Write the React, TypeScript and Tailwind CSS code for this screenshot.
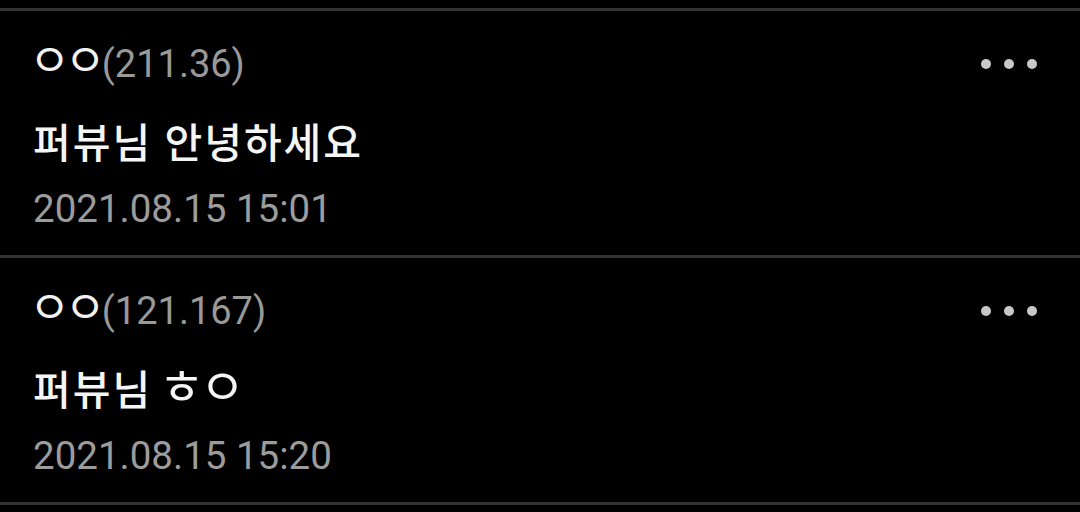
const comments = [
  { ip: "(211.36)", body: "퍼뷰님 안녕하세요", date: "2021.08.15 15:01" },
  { ip: "(121.167)", body: "퍼뷰님 ㅎㅇ", date: "2021.08.15 15:20" },
];

const font = { fontFamily: 'Roboto, "Noto Sans CJK KR", sans-serif' };

// compatibility jamo render small in Noto CJK; enlarge them like the phone font
function Jamo({ text, big }: { text: string; big?: boolean }) {
  return (
    <>
      {Array.from(text).map((ch, i) =>
        /[\u3131-\u318e]/.test(ch) ? (
          <span
            key={i}
            className={
              big
                ? "text-[50px] leading-[0px] tracking-[1px] -ml-[6px] font-normal"
                : "text-[45px] leading-[0px] tracking-[-6px] font-normal"
            }
          >
            {ch}
          </span>
        ) : (
          <span key={i}>{ch}</span>
        )
      )}
    </>
  );
}

function MoreDots() {
  return (
    <div className="flex items-center gap-[13px]">
      <span className="w-[10px] h-[10px] rounded-full bg-[#c8c8c8]" />
      <span className="w-[10px] h-[10px] rounded-full bg-[#c8c8c8]" />
      <span className="w-[10px] h-[10px] rounded-full bg-[#c8c8c8]" />
    </div>
  );
}

function Comment({ ip, body, date }: { ip: string; body: string; date: string }) {
  return (
    <div className="flex justify-between pl-[33px] pr-[43px] pt-[28px] pb-[21px] border-b-[3px] border-[#333333]">
      <div className="flex flex-col">
        <div className="h-[50px] leading-[50px] text-[38px] whitespace-nowrap">
          <span className="text-[#f2f2f2] -ml-[4px]">
            <Jamo text="ㅇㅇ" />
          </span>
          <span className="text-[#999999] ml-[2px]">{ip}</span>
        </div>
        <div className="mt-[27px] h-[56px] leading-[56px] text-[41px] tracking-[2px] font-medium text-[#f5f5f5] whitespace-nowrap">
          <Jamo text={body} big />
        </div>
        <div className="mt-[12px] h-[50px] leading-[50px] text-[38.5px] text-[#9c9c9c] whitespace-nowrap">
          {date}
        </div>
      </div>
      <div className="h-[50px] flex items-center">
        <MoreDots />
      </div>
    </div>
  );
}

export default function App() {
  return (
    <div className="w-[1080px] h-[512px] bg-black overflow-hidden" style={font}>
      <div className="h-[8px]" />
      <div className="border-t-[3px] border-[#333333]">
        {comments.map((c) => (
          <Comment key={c.ip} {...c} />
        ))}
      </div>
    </div>
  );
}
